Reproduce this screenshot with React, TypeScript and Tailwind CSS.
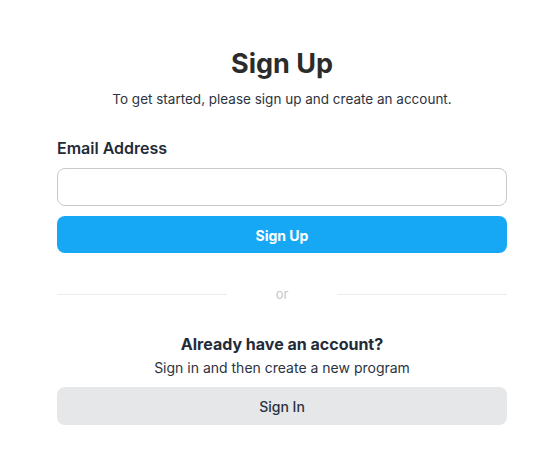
export default function App() {
  return (
    <div className="min-h-screen bg-white" style={{ fontFamily: 'Inter, "Noto Sans", sans-serif' }}>
      <div className="ml-[57px] w-[450px] pt-[47px]">
        <h1 className="text-center text-[27px] font-bold leading-[34px] text-[#2b2b2b]">Sign Up</h1>
        <p className="mt-[9px] text-center text-[13.5px] leading-[18px] text-[#2d3340]">
          To get started, please sign up and create an account.
        </p>
        <label className="mt-[29px] block text-[16px] font-semibold leading-[22px] text-[#232b38]">Email Address</label>
        <input className="mt-[9px] block h-[38px] w-full rounded-[8px] border border-[#c6c9ce] bg-white px-3 outline-none" />
        <button className="mt-[10px] flex h-[37px] w-full items-center justify-center rounded-[8px] bg-[#16a8f5] pt-px text-[14px] font-bold text-white">
          Sign Up
        </button>
        <div className="mt-[32px] flex items-center">
          <div className="h-px w-[170px] bg-[#ececec]" />
          <span className="flex-1 text-center text-[13px] leading-[18px] text-[#c3c6cb]">or</span>
          <div className="h-px w-[170px] bg-[#ececec]" />
        </div>
        <p className="mt-[30px] text-center text-[16px] font-bold leading-[22px] text-[#232b38]">Already have an account?</p>
        <p className="mt-[3px] text-center text-[14px] leading-[20px] text-[#2d3340]">Sign in and then create a new program</p>
        <button className="mt-[9px] flex h-[38px] w-full items-center justify-center rounded-[8px] bg-[#e6e7e9] text-[14px] font-medium text-[#2b3240]">
          Sign In
        </button>
      </div>
    </div>
  );
}
